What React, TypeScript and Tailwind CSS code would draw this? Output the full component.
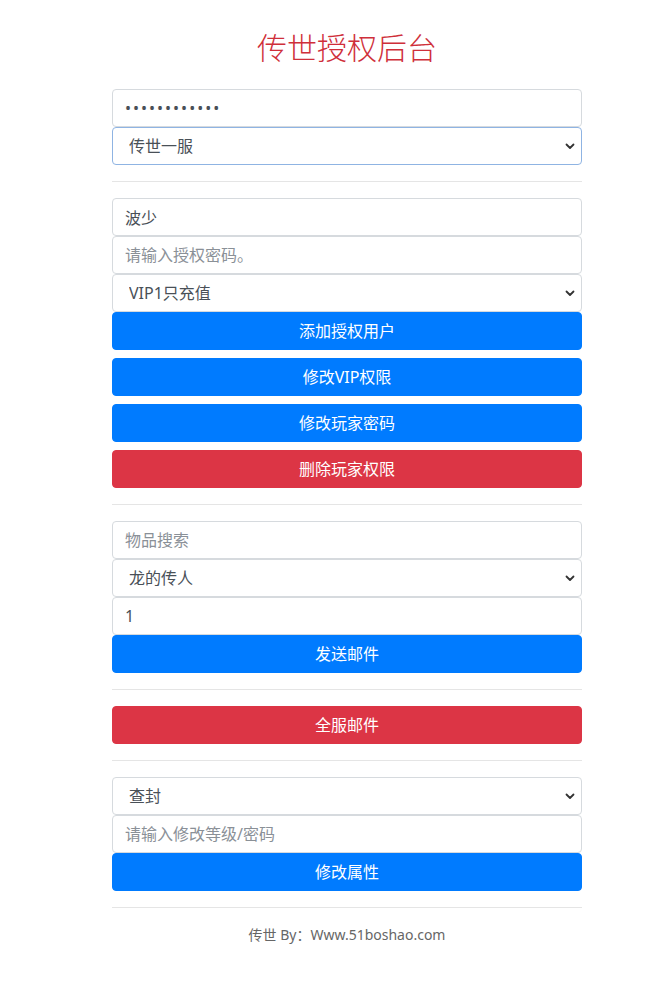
import { ReactNode } from "react";

const font = { fontFamily: '"Noto Sans", "Noto Sans CJK SC", sans-serif' };

function TextInput({ value, placeholder, type = "text" }: { value?: string; placeholder?: string; type?: string }) {
  return (
    <input
      type={type}
      defaultValue={value}
      placeholder={placeholder}
      className={`block w-full h-[38px] px-3 text-[16px] leading-6 text-[#495057] bg-white border border-[#d6dade] rounded outline-none placeholder:text-[#8a9097] ${
        type === "password" ? "tracking-[2px]" : ""
      }`}
      style={font}
    />
  );
}

function Select({ options, focused = false }: { options: string[]; focused?: boolean }) {
  return (
    <div className="relative">
      <select
        className={`block w-full h-[38px] pl-4 pr-8 text-[16px] leading-6 text-[#495057] bg-white border rounded outline-none appearance-none ${
          focused ? "border-[#8fb4e3]" : "border-[#d6dade]"
        }`}
        style={font}
        defaultValue={options[0]}
      >
        {options.map(o => (
          <option key={o}>{o}</option>
        ))}
      </select>
      <svg
        className="absolute right-[7px] top-1/2 -translate-y-1/2 pointer-events-none"
        width="10"
        height="10"
        viewBox="0 0 10 10"
      >
        <path d="M1.5 3.5 L5 7 L8.5 3.5" fill="none" stroke="#333" strokeWidth="1.8" strokeLinecap="round" strokeLinejoin="round" />
      </svg>
    </div>
  );
}

function Button({ children, danger = false, first = false }: { children: ReactNode; danger?: boolean; first?: boolean }) {
  return (
    <button
      className={`block w-full h-[38px] text-[16px] leading-6 text-white rounded border ${
        danger ? "bg-[#dc3545] border-[#dc3545]" : "bg-[#007bff] border-[#007bff]"
      } ${first ? "" : "mt-2"}`}
      style={font}
    >
      {children}
    </button>
  );
}

function Divider() {
  return <hr className="my-4 border-0 border-t border-[rgba(0,0,0,0.1)]" />;
}

export default function App() {
  return (
    <div className="min-h-screen bg-white" style={font}>
      <div className="w-[470px] ml-[112px] pt-[30px]">
        <div className="text-center text-[30px] leading-9 font-light text-[#cf2f3a] mb-[23px]">传世授权后台</div>

        <TextInput type="password" value="123456789012" />
        <Select options={["传世一服", "传世二服"]} focused />

        <Divider />

        <TextInput value="波少" />
        <TextInput placeholder="请输入授权密码。" />
        <Select options={["VIP1只充值", "VIP2", "VIP3"]} />
        <Button first>添加授权用户</Button>
        <Button>修改VIP权限</Button>
        <Button>修改玩家密码</Button>
        <Button danger>删除玩家权限</Button>

        <Divider />

        <TextInput placeholder="物品搜索" />
        <Select options={["龙的传人"]} />
        <TextInput value="1" />
        <Button first>发送邮件</Button>

        <Divider />

        <Button danger first>全服邮件</Button>

        <Divider />

        <Select options={["查封", "解封", "修改等级", "修改密码"]} />
        <TextInput placeholder="请输入修改等级/密码" />
        <Button first>修改属性</Button>

        <Divider />

        <div className="text-center text-[14px] leading-[21px] text-[#666]">传世 By：Www.51boshao.com</div>
      </div>
    </div>
  );
}
